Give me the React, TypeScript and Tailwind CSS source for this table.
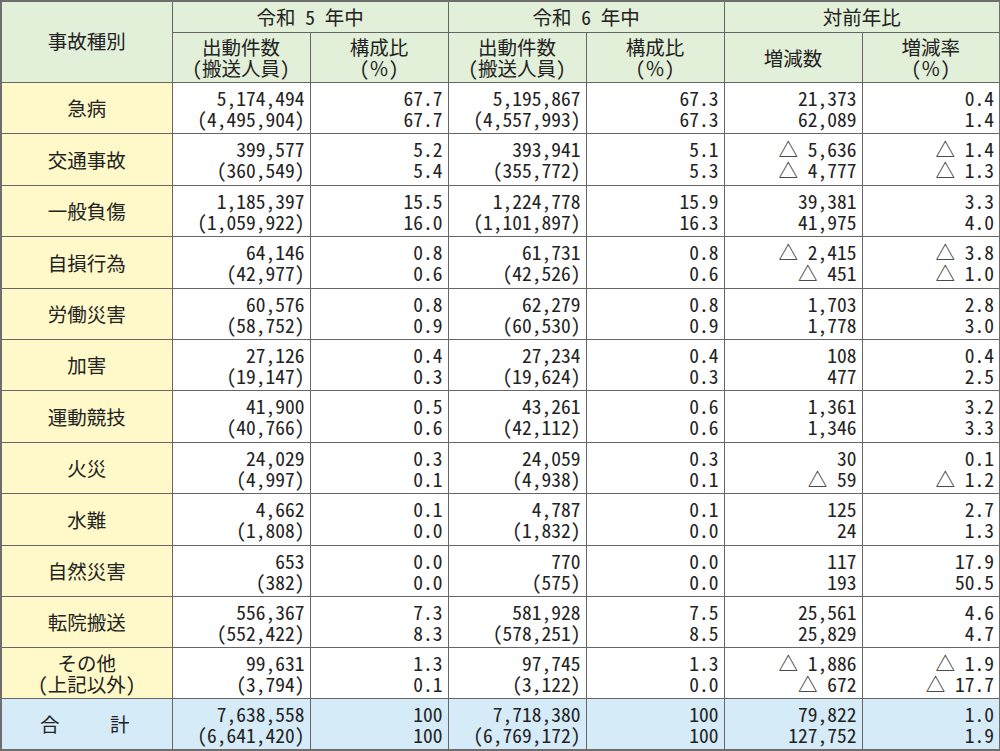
import React from "react";

type Row = {
  label: React.ReactNode;
  h: string;
  v: [string, string][];
  total?: boolean;
};

const rows: Row[] = [
  { label: "急病", h: "h-[51px]", v: [["5,174,494", "(4,495,904)"], ["67.7", "67.7"], ["5,195,867", "(4,557,993)"], ["67.3", "67.3"], ["21,373", "62,089"], ["0.4", "1.4"]] },
  { label: "交通事故", h: "h-[52px]", v: [["399,577", "(360,549)"], ["5.2", "5.4"], ["393,941", "(355,772)"], ["5.1", "5.3"], ["△ 5,636", "△ 4,777"], ["△ 1.4", "△ 1.3"]] },
  { label: "一般負傷", h: "h-[51px]", v: [["1,185,397", "(1,059,922)"], ["15.5", "16.0"], ["1,224,778", "(1,101,897)"], ["15.9", "16.3"], ["39,381", "41,975"], ["3.3", "4.0"]] },
  { label: "自損行為", h: "h-[52px]", v: [["64,146", "(42,977)"], ["0.8", "0.6"], ["61,731", "(42,526)"], ["0.8", "0.6"], ["△ 2,415", "△ 451"], ["△ 3.8", "△ 1.0"]] },
  { label: "労働災害", h: "h-[51px]", v: [["60,576", "(58,752)"], ["0.8", "0.9"], ["62,279", "(60,530)"], ["0.8", "0.9"], ["1,703", "1,778"], ["2.8", "3.0"]] },
  { label: "加害", h: "h-[51px]", v: [["27,126", "(19,147)"], ["0.4", "0.3"], ["27,234", "(19,624)"], ["0.4", "0.3"], ["108", "477"], ["0.4", "2.5"]] },
  { label: "運動競技", h: "h-[52px]", v: [["41,900", "(40,766)"], ["0.5", "0.6"], ["43,261", "(42,112)"], ["0.6", "0.6"], ["1,361", "1,346"], ["3.2", "3.3"]] },
  { label: "火災", h: "h-[51px]", v: [["24,029", "(4,997)"], ["0.3", "0.1"], ["24,059", "(4,938)"], ["0.3", "0.1"], ["30", "△ 59"], ["0.1", "△ 1.2"]] },
  { label: "水難", h: "h-[52px]", v: [["4,662", "(1,808)"], ["0.1", "0.0"], ["4,787", "(1,832)"], ["0.1", "0.0"], ["125", "24"], ["2.7", "1.3"]] },
  { label: "自然災害", h: "h-[51px]", v: [["653", "(382)"], ["0.0", "0.0"], ["770", "(575)"], ["0.0", "0.0"], ["117", "193"], ["17.9", "50.5"]] },
  { label: "転院搬送", h: "h-[51px]", v: [["556,367", "(552,422)"], ["7.3", "8.3"], ["581,928", "(578,251)"], ["7.5", "8.5"], ["25,561", "25,829"], ["4.6", "4.7"]] },
  {
    label: (
      <>
        その他
        <br />
        (上記以外)
      </>
    ),
    h: "h-[51px]",
    v: [["99,631", "(3,794)"], ["1.3", "0.1"], ["97,745", "(3,122)"], ["1.3", "0.0"], ["△ 1,886", "△ 672"], ["△ 1.9", "△ 17.7"]],
  },
  { label: "合計", h: "h-[52px]", total: true, v: [["7,638,558", "(6,641,420)"], ["100", "100"], ["7,718,380", "(6,769,172)"], ["100", "100"], ["79,822", "127,752"], ["1.0", "1.9"]] },
];

const cell = "border border-[#666666]";

function Pct() {
  return (
    <>
      (<span className="[font-feature-settings:normal]">％</span>)
    </>
  );
}

export default function App() {
  return (
    <div className="w-[1000px] h-[751px] bg-white font-['Noto_Sans_CJK_JP',sans-serif] text-[19.5px] text-[#222222] [font-feature-settings:'hwid']">
      <table className="w-[999px] table-fixed border-collapse border-2 border-[#6e6e6e]">
        <colgroup>
          <col className="w-[171px]" />
          <col className="w-[138px]" />
          <col className="w-[138px]" />
          <col className="w-[138px]" />
          <col className="w-[138px]" />
          <col className="w-[138px]" />
          <col className="w-[138px]" />
        </colgroup>
        <thead>
          <tr className="h-[31px] bg-[#e2efd9] leading-[22px]">
            <th rowSpan={2} className={`${cell} font-normal text-center align-middle pb-[2px]`}>
              事故種別
            </th>
            <th colSpan={2} className={`${cell} font-normal text-center`}>
              令和 5 年中
            </th>
            <th colSpan={2} className={`${cell} font-normal text-center`}>
              令和 6 年中
            </th>
            <th colSpan={2} className={`${cell} font-normal text-center`}>
              対前年比
            </th>
          </tr>
          <tr className="h-[50px] bg-[#e2efd9] leading-[21px]">
            <th className={`${cell} font-normal text-center`}>
              出動件数
              <br />
              (搬送人員)
            </th>
            <th className={`${cell} font-normal text-center`}>
              構成比
              <br />
              <Pct />
            </th>
            <th className={`${cell} font-normal text-center`}>
              出動件数
              <br />
              (搬送人員)
            </th>
            <th className={`${cell} font-normal text-center`}>
              構成比
              <br />
              <Pct />
            </th>
            <th className={`${cell} font-normal text-center`}>増減数</th>
            <th className={`${cell} font-normal text-center`}>
              増減率
              <br />
              <Pct />
            </th>
          </tr>
        </thead>
        <tbody>
          {rows.map((r, i) => (
            <tr key={i} className={`${r.h} ${r.total ? "bg-[#d6ebf8]" : "bg-white"} leading-[21px]`}>
              {r.total ? (
                <td className={`${cell} bg-[#d6ebf8]`}>
                  <div className="flex justify-between pl-[38px] pr-[42px]">
                    <span>合</span>
                    <span>計</span>
                  </div>
                </td>
              ) : (
                <td className={`${cell} bg-[#fff9c9] text-center`}>{r.label}</td>
              )}
              {r.v.map((p, j) => (
                <td key={j} className={`${cell} text-right pr-[5px] whitespace-nowrap`}>
                  {p[0]}
                  <br />
                  {p[1]}
                </td>
              ))}
            </tr>
          ))}
        </tbody>
      </table>
    </div>
  );
}
